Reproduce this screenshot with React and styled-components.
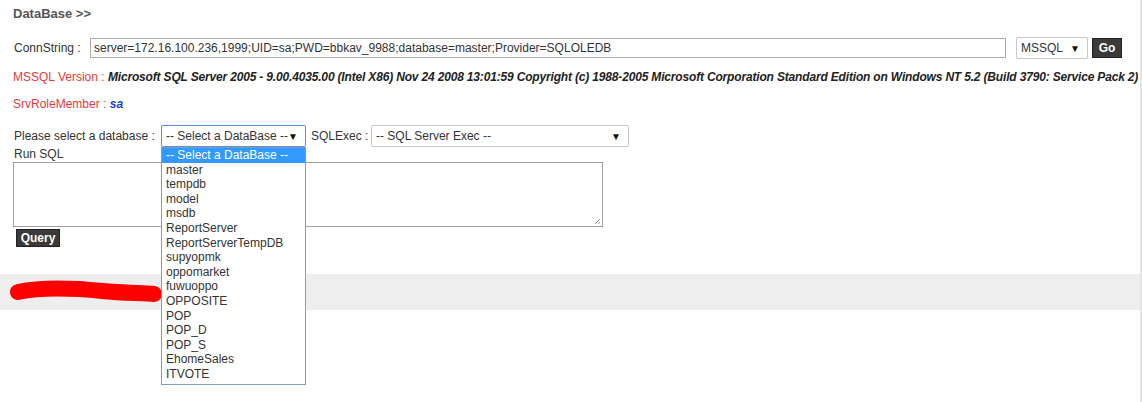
import React from "react";
import styled, { createGlobalStyle } from "styled-components";

const Global = createGlobalStyle`
  html, body { margin: 0; padding: 0; background: #fff; }
  body { font-family: "Liberation Sans", Arial, sans-serif; font-size: 12px; color: #333; }
`;

const Page = styled.div`
  width: 1140px;
  height: 402px;
  border-right: 2px solid #e4e4e4;
  display: flex;
  flex-direction: column;
  position: relative;
`;

const Content = styled.div`
  padding-left: 13px;
  display: flex;
  flex-direction: column;
`;

const Title = styled.div`
  margin-top: 6px;
  line-height: 16px;
  font-size: 13px;
  font-weight: bold;
  color: #555;
`;

const Row = styled.div`
  display: flex;
  align-items: center;
  height: ${(p) => p.$h || 22}px;
  margin-top: ${(p) => p.$mt || 0}px;
`;

const Label = styled.span`
  display: inline-block;
  width: ${(p) => (p.$w ? `${p.$w}px` : "auto")};
  flex: none;
  color: ${(p) => p.$color || "#333"};
  padding-left: ${(p) => p.$pl || 1}px;
`;

const TextInput = styled.div`
  box-sizing: border-box;
  width: 916px;
  height: 20px;
  border: 1px solid #a9a9a9;
  padding: 0 3px;
  line-height: 18px;
  color: #333;
  white-space: nowrap;
  overflow: hidden;
`;

const FakeSelect = styled.div`
  position: relative;
  box-sizing: border-box;
  width: ${(p) => p.$w}px;
  height: 22px;
  margin-left: ${(p) => p.$ml || 0}px;
  border: 1px solid ${(p) => (p.$focus ? "#5b8fd6" : "#c8c8c8")};
  border-radius: 2px;
  padding: 0 4px;
  display: flex;
  align-items: center;
  justify-content: space-between;
  color: #333;
  background: #fff;
  flex: none;
`;

const Arrow = styled.span`
  font-size: 10px;
  color: #111;
  margin-right: 3px;
`;

const DarkButton = styled.div`
  box-sizing: border-box;
  width: ${(p) => p.$w}px;
  height: ${(p) => p.$h}px;
  margin-left: ${(p) => p.$ml || 0}px;
  background: #3a3a3a;
  border: 1px solid #222;
  color: #fff;
  font-weight: bold;
  font-size: 12px;
  display: flex;
  align-items: center;
  justify-content: center;
  flex: none;
`;

const Info = styled.div`
  margin-top: ${(p) => p.$mt}px;
  line-height: 16px;
  white-space: nowrap;
`;

const Red = styled.span`
  color: #e53a3a;
`;

const Strong = styled.span`
  font-weight: bold;
  font-style: italic;
  letter-spacing: ${(p) => p.$ls || 0}px;
  color: ${(p) => p.$color || "#222"};
`;

const RunLabel = styled.div`
  line-height: 14px;
  padding-left: 1px;
`;

const Area = styled.div`
  position: relative;
  box-sizing: border-box;
  width: 590px;
  height: 65px;
  margin-top: 1px;
  border: 1px solid #a0a0a0;
  background: #fff;
`;

const Grip = styled.svg`
  position: absolute;
  right: 1px;
  bottom: 1px;
`;

const Band = styled.div`
  margin-top: 27px;
  height: 36px;
  background: #eeeeee;
  display: flex;
  align-items: center;
  padding-left: 2px;
`;

const List = styled.div`
  position: absolute;
  top: 21px;
  left: -1px;
  width: 145px;
  box-sizing: border-box;
  border: 1px solid #7f9db9;
  background: #fff;
  z-index: 5;
  padding-bottom: 2px;
`;

const Option = styled.div`
  height: 14.6px;
  line-height: 14.6px;
  padding-left: 4px;
  font-size: 12px;
  background: ${(p) => (p.$active ? "#3399ff" : "transparent")};
  color: ${(p) => (p.$active ? "#fff" : "#333")};
  white-space: nowrap;
`;

const dbs = [
  "-- Select a DataBase --",
  "master",
  "tempdb",
  "model",
  "msdb",
  "ReportServer",
  "ReportServerTempDB",
  "supyopmk",
  "oppomarket",
  "fuwuoppo",
  "OPPOSITE",
  "POP",
  "POP_D",
  "POP_S",
  "EhomeSales",
  "ITVOTE",
];

export default function App() {
  return (
    <>
      <Global />
      <Page>
        <Content>
          <Title>DataBase &gt;&gt;</Title>
          <Row $mt={15}>
            <Label $w={76}>ConnString :</Label>
            <TextInput>
              server=172.16.100.236,1999;UID=sa;PWD=bbkav_9988;database=master;Provider=SQLOLEDB
            </TextInput>
            <FakeSelect $w={72} $ml={10}>
              <span>MSSQL</span>
              <Arrow>▼</Arrow>
            </FakeSelect>
            <DarkButton $w={30} $h={20} $ml={4}>Go</DarkButton>
          </Row>
          <Info $mt={10}>
            <Red>MSSQL Version : </Red>
            <Strong $ls={-0.17}>
              Microsoft SQL Server 2005 - 9.00.4035.00 (Intel X86) Nov 24 2008 13:01:59 Copyright (c) 1988-2005 Microsoft Corporation Standard Edition on Windows NT 5.2 (Build 3790: Service Pack 2)
            </Strong>
          </Info>
          <Info $mt={11}>
            <Red>SrvRoleMember : </Red>
            <Strong $color="#1b3fd6">sa</Strong>
          </Info>
          <Row $mt={13}>
            <Label $w={147}>Please select a database :</Label>
            <FakeSelect $w={145} $focus>
              <span>-- Select a DataBase --</span>
              <Arrow>▼</Arrow>
              <List>
                {dbs.map((d, i) => (
                  <Option key={d} $active={i === 0}>{d}</Option>
                ))}
              </List>
            </FakeSelect>
            <Label $w={60} $pl={5}>SQLExec :</Label>
            <FakeSelect $w={258}>
              <span>-- SQL Server Exec --</span>
              <Arrow>▼</Arrow>
            </FakeSelect>
          </Row>
          <RunLabel>Run SQL</RunLabel>
          <Area>
            <Grip width="8" height="8" viewBox="0 0 8 8">
              <path d="M7 2 L2 7 M7 5 L5 7" stroke="#999" strokeWidth="1" fill="none" />
            </Grip>
          </Area>
          <Row $mt={2} $h={18}>
            <DarkButton $w={44} $h={18} $ml={3}>Query</DarkButton>
          </Row>
        </Content>
        <Band>
          <svg width="170" height="26" viewBox="0 0 170 26">
            <path
              d="M16 13 C40 8, 70 9, 100 12 C120 14, 140 14, 152 15"
              stroke="#ff0000"
              strokeWidth="16"
              strokeLinecap="round"
              fill="none"
            />
            <path d="M40 8 C70 6, 100 9, 140 11" stroke="#ff0000" strokeWidth="7" strokeLinecap="round" fill="none" />
          </svg>
        </Band>
      </Page>
    </>
  );
}
